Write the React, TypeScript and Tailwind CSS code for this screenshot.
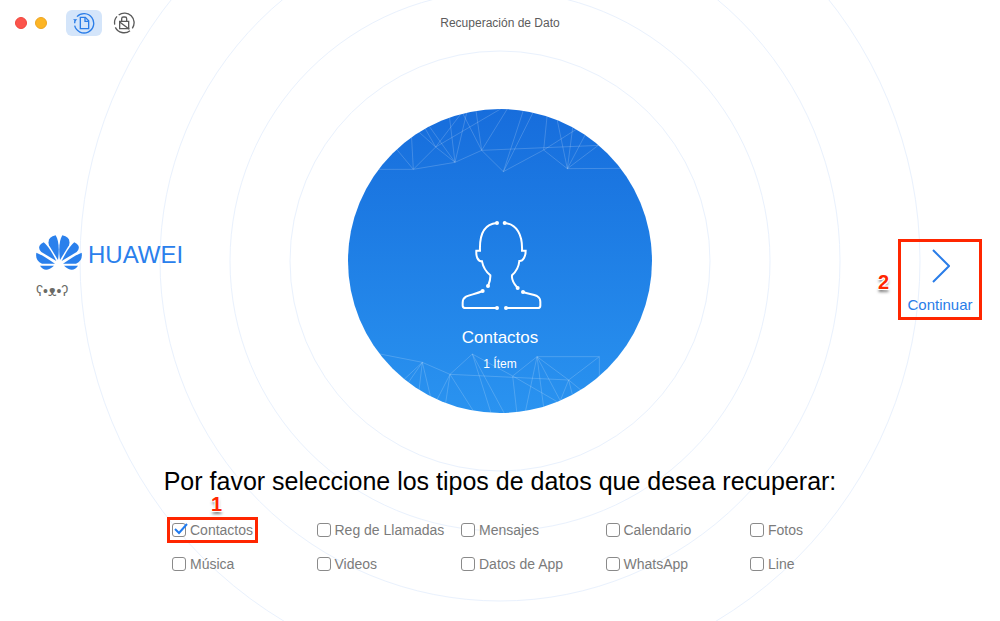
import React, { useState } from 'react';

const DATA_TYPES = [
  'Contactos',
  'Reg de Llamadas',
  'Mensajes',
  'Calendario',
  'Fotos',
  'Música',
  'Videos',
  'Datos de App',
  'WhatsApp',
  'Line',
];

const RING_RADII = [210, 270, 340, 420];

const Rings = () => (
  <svg
    className="absolute left-1/2 top-[261px] h-[842px] w-[842px] -translate-x-1/2 -translate-y-1/2"
    viewBox="-421 -421 842 842"
    fill="none"
    stroke="#e9f1fd"
    aria-hidden="true"
  >
    {RING_RADII.map((r) => (
      <circle key={r} r={r} />
    ))}
  </svg>
);

const RestoreIcon = () => (
  <svg width="22" height="22" viewBox="0 0 66 66" fill="none" stroke="currentColor" strokeWidth="4" aria-hidden="true">
    <path d="M12 14a29 29 0 1 1-7 27" />
    <path d="M5 34a29 29 0 0 1 2-11" />
    <path d="M0 22l7 6 6-6z" fill="currentColor" stroke="none" />
    <path d="M22 16h15l10 10v24H22z" />
    <path d="M36 16v12h11" />
  </svg>
);

const UnlockIcon = () => (
  <svg width="22" height="22" viewBox="0 0 66 66" fill="none" stroke="currentColor" strokeWidth="4" aria-hidden="true">
    <path d="M5 38a29 29 0 0 1 7-25" />
    <path d="M17 9a29 29 0 0 1 41 40" />
    <path d="M7 46a29 29 0 0 0 44 10" />
    <path d="M20 28h27v22H20z" />
    <path d="M26 28v-8q0-5 5-5h5q5 0 5 5v8" />
    <path d="M19 29l30 23" />
  </svg>
);

const HuaweiPetals = () => (
  <>
    <path d="M114 119L87 75Q80 50 107 45Q121 68 114 119Z" />
    <path d="M109 122L64 95Q48 78 71 66Q88 79 109 122Z" />
    <path d="M105 130H66Q45 122 49 97Q62 101 105 130Z" />
    <path d="M102 136H60Q76 160 102 136Z" />
  </>
);

const HuaweiLogo = () => (
  <svg className="self-start" width="46" height="36" viewBox="48 44 138 108" fill="currentColor" aria-hidden="true">
    <HuaweiPetals />
    <g transform="translate(234 0) scale(-1 1)">
      <HuaweiPetals />
    </g>
  </svg>
);

// Thin network pattern on the top and bottom of the disc
const Mesh = () => (
  <svg className="absolute inset-0 h-full w-full" viewBox="0 0 912 912" fill="none" stroke="#fff" strokeOpacity="0.18" strokeWidth="3" aria-hidden="true">
    <g transform="translate(-24 -27)">
      <path d="M100 208H220L345 187L425 151L780 136M425 151L490 215L611 150L682 206L850 205" />
      <path d="M165 142L220 208L214 100M220 208L287 141L370 32M287 141L490 22M230 90L287 141L345 187M250 76L287 141" />
      <path d="M260 68L345 187L327 40M345 187L382 30M364 32L425 151L407 25M425 151L506 20" />
      <path d="M552 25L490 215L584 28M622 40L611 150L715 84M650 52L682 206L699 76M682 206L740 96M682 206L780 132" />
    </g>
    <g transform="translate(-24 663)">
      <path d="M110 70L247 97L330 133L397 72L518 138L591 80H778V150" />
      <path d="M330 133L686 150L591 80M686 150L778 80M518 138L660 220" />
      <path d="M247 97L185 155M247 97L200 165M247 97L236 190M247 97L274 210M330 133L288 215M330 133L316 225M330 133L402 246" />
      <path d="M397 72L454 252M397 72L494 252M518 138L531 252M591 80L555 250M591 80L612 240M591 80L665 220M686 150L656 224M686 150L700 205M686 150L730 186" />
    </g>
  </svg>
);

const PersonIcon = () => (
  <svg width="84" height="90" viewBox="54 30 252 270" fill="none" stroke="#fff" strokeWidth="6" aria-hidden="true">
    <path d="M170 39C135 42 118 70 120 122H109C108 138 112 154 126 154C130 175 138 185 151 196C152 210 148 218 144 228" />
    <path d="M194 39C230 42 248 75 246 122H257C257 138 250 154 238 153C236 175 228 185 216 196C214 212 222 222 233 234" />
    <path d="M128 243C108 252 90 254 78 260Q68 266 68 278V287Q68 294 77 294H170" />
    <path d="M249 246C268 252 280 253 291 258Q301 264 301 275V287Q301 294 293 294H198" />
    <g fill="#fff" stroke="none">
      <circle cx="171" cy="39" r="6" />
      <circle cx="194" cy="39" r="6" />
      <circle cx="144" cy="228" r="6" />
      <circle cx="128" cy="243" r="6" />
      <circle cx="233" cy="234" r="6" />
      <circle cx="249" cy="246" r="6" />
      <circle cx="171" cy="294" r="6" />
      <circle cx="198" cy="294" r="6" />
    </g>
  </svg>
);

interface StepNumberProps {
  value: number;
  className: string;
}

const StepNumber: React.FC<StepNumberProps> = ({ value, className }) => (
  <span
    className={`absolute text-xl leading-5 font-bold text-[#ff2600] [text-shadow:-1px_-1px_0_#fff,1px_-1px_0_#fff,-1px_1px_0_#fff,1px_1px_0_#fff,0_3px_3px_#777] ${className}`}
  >
    {value}
  </span>
);

interface TypeOptionProps {
  label: string;
  checked: boolean;
  onToggle: () => void;
  children?: React.ReactNode;
}

const TypeOption: React.FC<TypeOptionProps> = ({ label, checked, onToggle, children }) => (
  <label className="relative flex items-center gap-1 justify-self-start text-sm leading-4 whitespace-nowrap text-[#7b7b7b]">
    <input
      type="checkbox"
      checked={checked}
      onChange={onToggle}
      className="h-3.5 w-3.5 shrink-0 appearance-none rounded-[3px] border border-[#8a8a8a] bg-white"
    />
    {checked && (
      <svg className="absolute left-0 top-0 h-4 w-4" viewBox="0 0 16 16" fill="none" stroke="#1f7bf0" strokeWidth="2" aria-hidden="true">
        <path d="M3 7l4 4 8-9" />
      </svg>
    )}
    {label}
    {children}
  </label>
);

export default function App() {
  const [selected, setSelected] = useState<string[]>(['Contactos']);

  const toggle = (label: string) => {
    setSelected((prev) => (prev.includes(label) ? prev.filter((item) => item !== label) : [...prev, label]));
  };

  return (
    <div className="relative min-h-screen overflow-hidden bg-white font-['Liberation_Sans',Arial,sans-serif]">
      <Rings />

      <div className="relative">
        {/* Title bar */}
        <header className="grid h-[45px] grid-cols-[1fr_auto_1fr] items-center">
          <div className="flex items-center pl-[15px]">
            <button type="button" aria-label="Cerrar" className="h-3 w-3 rounded-full border border-[#f0463d] bg-[#fc544c]" />
            <button type="button" aria-label="Minimizar" className="ml-2 h-3 w-3 rounded-full border border-[#eda522] bg-[#fdb525]" />
            <button type="button" aria-label="Recuperar datos" className="ml-[19px] flex h-[26px] w-9 items-center justify-center rounded-md bg-[#d4e5fa] text-[#2a7de8]">
              <RestoreIcon />
            </button>
            <button type="button" aria-label="Desbloquear" className="ml-[11px] text-[#5a5a5a]">
              <UnlockIcon />
            </button>
          </div>
          <h1 className="text-xs text-[#5c5c5c]">Recuperación de Dato</h1>
        </header>

        <main>
          <div className="mt-16 grid grid-cols-[1fr_304px_1fr] items-start">
            {/* Device */}
            <div className="mt-[126px] pl-9">
              <div className="flex items-center gap-1.5 text-[#2a80ec]">
                <HuaweiLogo />
                <span className="text-2xl leading-10">HUAWEI</span>
              </div>
              <p className="mt-2 text-sm leading-4 text-[#6b6b66]">ʕ•ᴥ•ʔ</p>
            </div>

            {/* Current data type */}
            <div className="relative flex h-[304px] flex-col items-center overflow-hidden rounded-full bg-linear-to-b from-[#176ddc] to-[#2a93f0] pt-[111px] text-white">
              <Mesh />
              <PersonIcon />
              <p className="mt-4 text-[17px] leading-6">Contactos</p>
              <p className="mt-1 text-xs leading-5">1 Ítem</p>
            </div>

            {/* Next step */}
            <div className="relative mt-[130px] mr-[18px] justify-self-end">
              <button
                type="button"
                className="flex h-[81px] w-[84px] flex-col items-center justify-between border-3 border-[#ff2600] pt-1.5 pb-1 text-[15px] leading-4 text-[#2a7de8]"
              >
                <svg width="20" height="36" viewBox="0 0 20 36" fill="none" stroke="currentColor" strokeWidth="2" aria-hidden="true">
                  <path d="M3 2l16 16L3 34" />
                </svg>
                Continuar
              </button>
              <StepNumber value={2} className="right-full top-[33px] mr-[9px]" />
            </div>
          </div>

          <h2 className="mt-[52px] text-center text-[25px] leading-8 text-black">
            Por favor seleccione los tipos de datos que desea recuperar:
          </h2>

          <div className="mx-auto mt-[25px] grid w-full max-w-[656px] grid-cols-[repeat(4,1fr)_78px] gap-y-[18px]">
            {DATA_TYPES.map((label, i) => (
              <TypeOption key={label} label={label} checked={selected.includes(label)} onToggle={() => toggle(label)}>
                {i === 0 && (
                  <>
                    <span className="pointer-events-none absolute -inset-[5px] border-3 border-[#ff2600]" />
                    <StepNumber value={1} className="bottom-full left-[39px] mb-2" />
                  </>
                )}
              </TypeOption>
            ))}
          </div>
        </main>
      </div>
    </div>
  );
}
